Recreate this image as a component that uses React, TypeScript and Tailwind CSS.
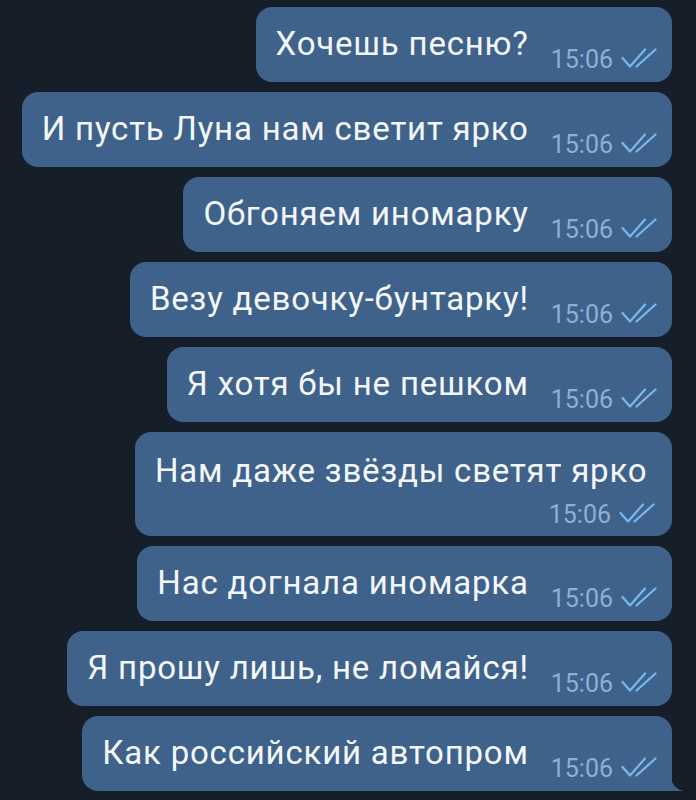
const messages: { text: string; wrap?: boolean }[] = [
  { text: "Хочешь песню?" },
  { text: "И пусть Луна нам светит ярко" },
  { text: "Обгоняем иномарку" },
  { text: "Везу девочку-бунтарку!" },
  { text: "Я хотя бы не пешком" },
  { text: "Нам даже звёзды светят ярко", wrap: true },
  { text: "Нас догнала иномарка" },
  { text: "Я прошу лишь, не ломайся!" },
  { text: "Как российский автопром" },
]

function Ticks({ className }: { className?: string }) {
  return (
    <svg
      width="36"
      height="20"
      viewBox="0 0 36 20"
      fill="none"
      stroke="#78b8ef"
      strokeWidth="2.2"
      strokeLinecap="round"
      strokeLinejoin="round"
      className={className}
    >
      <path d="M1.5 10 L9 18.5 L24 1.5" />
      <path d="M15.5 18.5 L34.5 1.5" />
    </svg>
  )
}

function Time() {
  return (
    <>
      <span className="ml-[22px] text-[25px] leading-[25px] text-[#8db0d4]">15:06</span>
      <Ticks className="mb-[4px] ml-[8px] shrink-0" />
    </>
  )
}

function Bubble({ text, last }: { text: string; last?: boolean }) {
  return (
    <div
      className={`relative flex items-end rounded-[16px] bg-[#3f628b] pt-[19px] pr-[15px] pb-[10px] pl-5 ${
        last ? "rounded-br-none" : ""
      }`}
    >
      <span className="mb-[10px] whitespace-nowrap text-[33px] leading-[36px] tracking-[0.8px] text-[#f3f6fa]">
        {text}
      </span>
      <Time />
      {last && (
        <svg
          width="12"
          height="14"
          viewBox="0 0 12 14"
          className="absolute right-[-11px] bottom-0"
        >
          <path d="M0 0 Q1 11 12 14 L0 14 Z" fill="#3f628b" />
        </svg>
      )}
    </div>
  )
}

function WrappedBubble({ text }: { text: string }) {
  return (
    <div className="flex w-[537px] flex-col rounded-[16px] bg-[#3f628b] pt-[21px] pr-[17px] pb-[9px] pl-5">
      <span className="whitespace-nowrap text-[33px] leading-[36px] tracking-[0.8px] text-[#f3f6fa]">
        {text}
      </span>
      <div className="mt-[13px] flex items-end self-end">
        <span className="text-[25px] leading-[25px] text-[#8db0d4]">15:06</span>
        <Ticks className="mb-[4px] ml-[8px] shrink-0" />
      </div>
    </div>
  )
}

export default function App() {
  return (
    <main className="flex h-[800px] flex-col items-end gap-[10px] overflow-hidden bg-[#151e29] pt-[7px] pr-[24px] font-['Roboto',sans-serif]">
      {messages.map((m, i) =>
        m.wrap ? (
          <WrappedBubble key={i} text={m.text} />
        ) : (
          <Bubble key={i} text={m.text} last={i === messages.length - 1} />
        )
      )}
    </main>
  )
}
